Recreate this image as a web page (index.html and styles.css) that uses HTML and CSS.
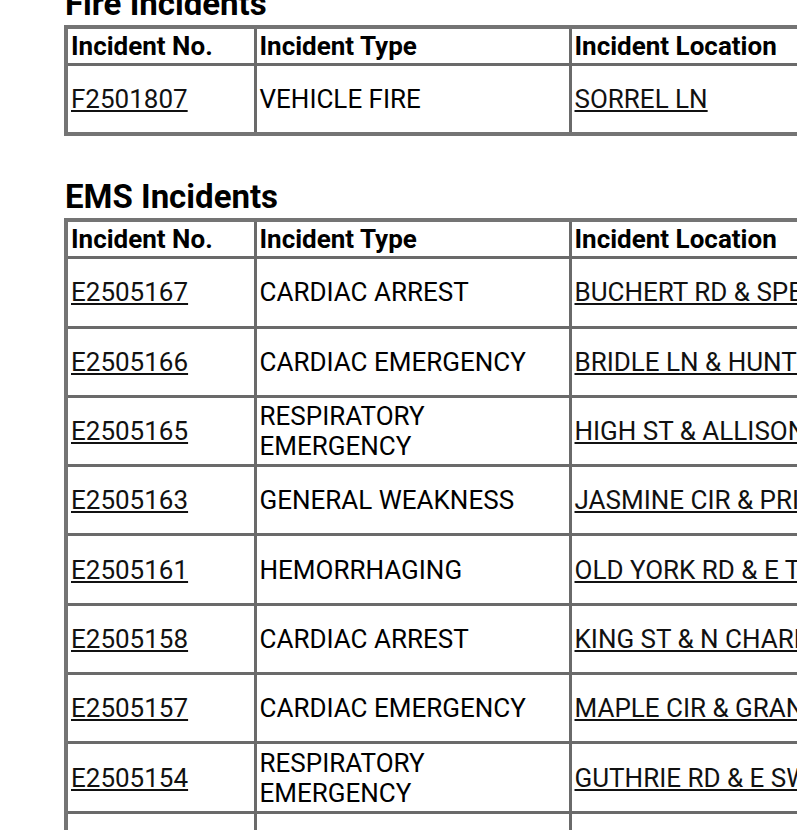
FILE: index.html
```html
<!DOCTYPE html>
<html lang="en">
<head>
<meta charset="utf-8">
<title>Incidents</title>
<link rel="stylesheet" href="styles.css">
</head>
<body>
<div class="page">
  <h2 class="section-title">Fire Incidents</h2>
  <table class="incidents">
    <colgroup><col class="c-no"><col class="c-type"><col class="c-loc"><col class="c-muni"></colgroup>
    <thead>
      <tr><th>Incident No.</th><th>Incident Type</th><th>Incident Location</th><th>Municipality</th></tr>
    </thead>
    <tbody>
      <tr><td><a href="#">F2501807</a></td><td>VEHICLE FIRE</td><td class="loc"><a href="#">SORREL LN</a></td><td>HORSHAM</td></tr>
    </tbody>
  </table>

  <h2 class="section-title ems">EMS Incidents</h2>
  <table class="incidents">
    <colgroup><col class="c-no"><col class="c-type"><col class="c-loc"><col class="c-muni"></colgroup>
    <thead>
      <tr><th>Incident No.</th><th>Incident Type</th><th>Incident Location</th><th>Municipality</th></tr>
    </thead>
    <tbody>
      <tr><td><a href="#">E2505167</a></td><td>CARDIAC ARREST</td><td class="loc"><a href="#">BUCHERT RD &amp; SPECHT RD</a></td><td>POTTSTOWN</td></tr>
      <tr><td><a href="#">E2505166</a></td><td>CARDIAC EMERGENCY</td><td class="loc"><a href="#">BRIDLE LN &amp; HUNT CLUB DR</a></td><td>LOWER GWYNEDD</td></tr>
      <tr><td><a href="#">E2505165</a></td><td>RESPIRATORY EMERGENCY</td><td class="loc"><a href="#">HIGH ST &amp; ALLISON ST</a></td><td>POTTSTOWN</td></tr>
      <tr><td><a href="#">E2505163</a></td><td>GENERAL WEAKNESS</td><td class="loc"><a href="#">JASMINE CIR &amp; PRIMROSE LN</a></td><td>UPPER MERION</td></tr>
      <tr><td><a href="#">E2505161</a></td><td>HEMORRHAGING</td><td class="loc"><a href="#">OLD YORK RD &amp; E TOWNSHIP LINE RD</a></td><td>JENKINTOWN</td></tr>
      <tr><td><a href="#">E2505158</a></td><td>CARDIAC ARREST</td><td class="loc"><a href="#">KING ST &amp; N CHARLOTTE ST</a></td><td>POTTSTOWN</td></tr>
      <tr><td><a href="#">E2505157</a></td><td>CARDIAC EMERGENCY</td><td class="loc"><a href="#">MAPLE CIR &amp; GRANITE DR</a></td><td>LIMERICK</td></tr>
      <tr><td><a href="#">E2505154</a></td><td>RESPIRATORY EMERGENCY</td><td class="loc"><a href="#">GUTHRIE RD &amp; E SWAMP RD</a></td><td>DOUGLASS</td></tr>
      <tr><td><a href="#">E2505152</a></td><td>FALL VICTIM</td><td class="loc"><a href="#">MAIN ST &amp; CHURCH RD</a></td><td>LANSDALE</td></tr>
      <tr><td><a href="#">E2505150</a></td><td>SUBJECT IN PAIN</td><td class="loc"><a href="#">GERMANTOWN PIKE</a></td><td>PLYMOUTH</td></tr>
    </tbody>
  </table>
</div>
</body>
</html>
```

FILE: styles.css
```css
html, body {
  overflow: hidden;
}
body {
  margin: 0 0 0 64px;
  font-family: Roboto, "Liberation Sans", Arial, sans-serif;
  color: #000;
  background: #fff;
}
.page {
  margin-top: -14px;
  width: 1400px;
}
.section-title {
  font-size: 33px;
  font-weight: 700;
  margin: 0 0 3px 1px;
  line-height: 36px;
}
.section-title.ems {
  margin-top: 43px;
}
.incidents {
  border-collapse: collapse;
  table-layout: fixed;
  border: 4px solid #747474;
  font-size: 26px;
}
.c-no { width: 189px; }
.c-type { width: 315px; }
.c-loc { width: 520px; }
.c-muni { width: 260px; }
.incidents th,
.incidents td {
  border: 3px solid #6a6a6a;
  text-align: left;
  vertical-align: middle;
  line-height: 30px;
}
.incidents th {
  font-weight: 700;
  padding: 2px 3px;
}
.incidents td {
  height: 66.3px;
  padding: 0 3px;
}
.incidents td.loc {
  white-space: nowrap;
}
.incidents a {
  color: #111;
  text-decoration: underline;
}
```
